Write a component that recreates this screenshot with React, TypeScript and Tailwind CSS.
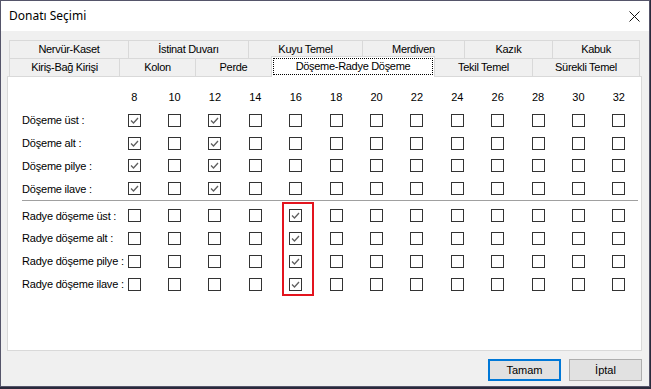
import React from "react";

const cols = [8, 10, 12, 14, 16, 18, 20, 22, 24, 26, 28, 30, 32];

const dosemeRows = ["Döşeme üst :", "Döşeme alt :", "Döşeme pilye :", "Döşeme ilave :"];
const radyeRows = ["Radye döşeme üst :", "Radye döşeme alt :", "Radye döşeme pilye :", "Radye döşeme ilave :"];

function Box({ checked }: { checked: boolean }) {
  return (
    <div className="w-[13px] h-[13px] border border-[#333333] bg-white flex items-center justify-center">
      {checked && (
        <svg width="11" height="11" viewBox="0 0 11 11">
          <polyline points="2,5.5 4.5,8 9,3" fill="none" stroke="#5f5f5f" strokeWidth="1.3" />
        </svg>
      )}
    </div>
  );
}

function Row({ label, checkedCols }: { label: string; checkedCols: number[] }) {
  return (
    <div className="flex h-[22.8px] items-center">
      <div className="w-[92px] whitespace-nowrap text-[11px] tracking-[-0.2px] text-black">{label}</div>
      {cols.map((c) => (
        <div key={c} className="w-[40.4px] flex justify-center">
          <Box checked={checkedCols.includes(c)} />
        </div>
      ))}
    </div>
  );
}

function Tab({ label, w, last, noLeft }: { label: string; w: string; last?: boolean; noLeft?: boolean }) {
  return (
    <div
      className={`${w} h-[18px] border-t border-[#d9d9d9] ${noLeft ? "" : "border-l"} ${
        last ? "border-r" : ""
      } bg-[#f0f0f0] flex items-center justify-center text-[11px] tracking-[-0.3px] text-black whitespace-nowrap`}
    >
      {label}
    </div>
  );
}

export default function App() {
  return (
    <div
      className="w-[651px] h-[389px] bg-[#2a2a3c] overflow-hidden"
      style={{ fontFamily: '"Liberation Sans", Arial, sans-serif' }}
    >
      <div className="w-[650px] h-[387px] border border-[#55556a] bg-[#f0f0f0] flex flex-col">
        {/* Title bar */}
        <div className="h-[30px] bg-white flex items-center justify-between pl-[8px] pr-[8px]">
          <span className="text-[12px] text-black" style={{ fontFamily: '"Noto Sans", "Open Sans", sans-serif' }}>
            Donatı Seçimi
          </span>
          <svg width="11" height="11" viewBox="0 0 11 11" className="mr-[1px]">
            <line x1="0.5" y1="0.5" x2="10.5" y2="10.5" stroke="#111" strokeWidth="1" />
            <line x1="10.5" y1="0.5" x2="0.5" y2="10.5" stroke="#111" strokeWidth="1" />
          </svg>
        </div>

        {/* Body */}
        <div className="flex-1 flex flex-col pl-[6px] pr-[7px] pt-[9px]">
          {/* Tab row 1 */}
          <div className="flex ml-[2px]">
            <Tab label="Nervür-Kaset" w="w-[119px]" />
            <Tab label="İstinat Duvarı" w="w-[120px]" />
            <Tab label="Kuyu Temel" w="w-[114px]" />
            <Tab label="Merdiven" w="w-[102px]" />
            <Tab label="Kazık" w="w-[88px]" />
            <Tab label="Kabuk" w="w-[88px]" last />
          </div>
          {/* Tab row 2 */}
          <div className="flex ml-[2px] items-start h-[18px]">
            <Tab label="Kiriş-Bağ Kirişi" w="w-[110px]" />
            <Tab label="Kolon" w="w-[76px]" />
            <Tab label="Perde" w="w-[76px]" />
            <div className="relative z-10 w-[164px] h-[21px] -mt-[2px] bg-white border-t border-l border-r border-[#d9d9d9] pt-[1px] px-[1px]">
              <div className="h-[17px] border border-dotted border-black flex items-center justify-center text-[11px] tracking-[-0.3px] text-black whitespace-nowrap">
                Döşeme-Radye Döşeme
              </div>
            </div>
            <Tab label="Tekil Temel" w="w-[97px]" noLeft />
            <Tab label="Sürekli Temel" w="w-[108px]" last />
          </div>

          {/* Panel */}
          <div className="h-[275px] w-[635px] bg-white border border-[#d9d9d9] pl-[14px] pt-[8px]">
            <div className="flex h-[24px] items-center">
              <div className="w-[92px]" />
              {cols.map((c) => (
                <div key={c} className="w-[40.4px] text-center text-[11px] text-black">
                  {c}
                </div>
              ))}
            </div>
            {dosemeRows.map((r) => (
              <Row key={r} label={r} checkedCols={[8, 12]} />
            ))}
            <div className="h-px bg-[#a0a0a0] w-[616px]" />
            <div className="relative pt-[3.2px]">
              {radyeRows.map((r) => (
                <Row key={r} label={r} checkedCols={[16]} />
              ))}
              <div className="absolute left-[260px] top-[1px] bottom-0 w-[32px] border-2 border-[#e3141e]" />
            </div>
          </div>

          {/* Buttons */}
          <div className="flex justify-end gap-[8px] mt-[8px] pr-[0px]">
            <button className="w-[73px] h-[22px] bg-[#e1e1e1] border-2 border-[#0078d7] text-[11px] text-black">
              Tamam
            </button>
            <button className="w-[73px] h-[22px] bg-[#e1e1e1] border border-[#adadad] text-[11px] text-black">
              İptal
            </button>
          </div>
        </div>
      </div>
    </div>
  );
}
